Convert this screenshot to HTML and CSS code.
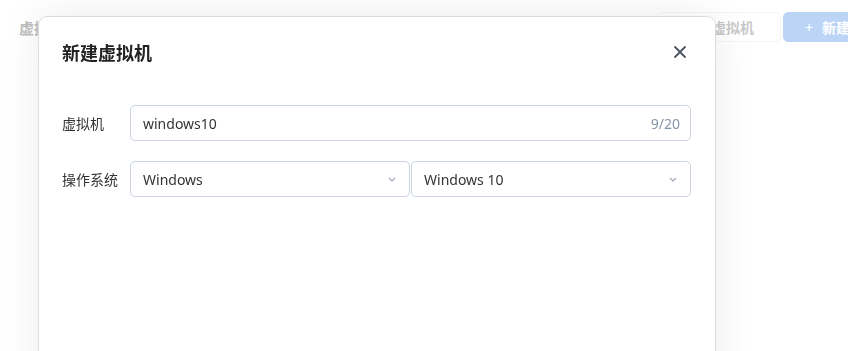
FILE: index.html
```html
<!DOCTYPE html>
<html lang="zh-CN">
  <head>
    <meta charset="UTF-8" />
    <meta name="viewport" content="width=device-width, initial-scale=1.0" />
    <link rel="stylesheet" href="styles.css">
  </head>
  <body>
    <div class="page">
      <div class="page-header">
        <h3>虚拟机</h3>
        <div class="actions">
          <button class="btn btn-default">导入虚拟机</button>
          <button class="btn btn-primary"><span class="plus">+</span>新建虚拟机</button>
        </div>
      </div>
    </div>

    <div class="mask"></div>

    <div class="dialog">
      <div class="dialog-header">
        <h2>新建虚拟机</h2>
        <button class="close-button" aria-label="关闭">
          <svg width="14" height="14" viewBox="0 0 14 14">
            <path d="M2 2 L12 12 M12 2 L2 12" stroke="#4a5262" stroke-width="1.8" stroke-linecap="round" />
          </svg>
        </button>
      </div>
      <div class="dialog-body">
        <div class="form-row">
          <label class="form-label">虚拟机</label>
          <div class="input">
            <span class="input-value">windows10</span>
            <span class="input-count">9/20</span>
          </div>
        </div>
        <div class="form-row">
          <label class="form-label">操作系统</label>
          <div class="select-group">
            <div class="select">
              <span class="input-value">Windows</span>
              <svg class="chevron" width="8" height="5" viewBox="0 0 8 5">
                <path d="M1 1 L4 4 L7 1" fill="none" stroke="#9aa6b6" stroke-width="1.1" />
              </svg>
            </div>
            <div class="select">
              <span class="input-value">Windows 10</span>
              <svg class="chevron" width="8" height="5" viewBox="0 0 8 5">
                <path d="M1 1 L4 4 L7 1" fill="none" stroke="#9aa6b6" stroke-width="1.1" />
              </svg>
            </div>
          </div>
        </div>
      </div>
    </div>
  </body>
</html>
```

FILE: styles.css
```css
body {
  margin: 0;
  font-family: "Noto Sans", "Noto Sans CJK SC", sans-serif;
  color: #333;
  background: #fff;
  overflow: hidden;
}

.page {
  padding: 12px 0 0 19px;
}

.page-header {
  display: flex;
  align-items: center;
  justify-content: space-between;
  height: 30px;
}

.page-header h3 {
  margin: 0;
  font-size: 15px;
  font-weight: 600;
  color: #333;
}

.actions {
  display: flex;
  gap: 2px;
  margin-right: -59px;
}

.btn {
  height: 30px;
  width: 124px;
  padding: 0 16px;
  border-radius: 5px;
  font-family: inherit;
  font-size: 14px;
  font-weight: 600;
  white-space: nowrap;
  cursor: pointer;
}

.btn-default {
  background: #fff;
  border: 1px solid #d8dce2;
  color: #555;
}

.btn-primary {
  background: #2f7ee6;
  border: 1px solid #2f7ee6;
  color: #fff;
  padding-left: 21px;
  text-align: left;
}

.plus {
  font-weight: 400;
  margin-right: 9px;
}

.mask {
  position: fixed;
  inset: 0;
  background: rgba(255, 255, 255, 0.68);
}

.dialog {
  position: absolute;
  left: 38px;
  top: 16px;
  width: 678px;
  height: 400px;
  box-sizing: border-box;
  background: #fff;
  border: 1px solid #dcdcdc;
  border-radius: 9px;
  box-shadow: 0 0 40px rgba(0, 0, 0, 0.08);
}

.dialog-header {
  display: flex;
  align-items: center;
  justify-content: space-between;
  padding: 22px 28px 0 23px;
}

.dialog-header h2 {
  margin: 0;
  font-size: 18px;
  font-weight: 700;
  color: #222;
}

.close-button {
  display: flex;
  padding: 0;
  border: none;
  background: transparent;
  cursor: pointer;
}

.dialog-body {
  display: flex;
  flex-direction: column;
  gap: 20px;
  padding: 40px 24px 0 23px;
}

.form-row {
  display: flex;
  align-items: center;
}

.form-label {
  width: 68px;
  flex-shrink: 0;
  font-size: 14px;
  color: #333;
}

.input,
.select {
  display: flex;
  align-items: center;
  justify-content: space-between;
  height: 36px;
  box-sizing: border-box;
  padding: 0 10px 0 12px;
  border: 1px solid #c9d4df;
  border-radius: 5px;
  font-size: 14px;
}

.input {
  flex: 1;
}

.input-value {
  color: #333;
}

.input-count {
  color: #8595a8;
}

.select-group {
  flex: 1;
  display: flex;
  gap: 1px;
}

.select {
  flex: 1;
  padding-right: 13px;
}
```
